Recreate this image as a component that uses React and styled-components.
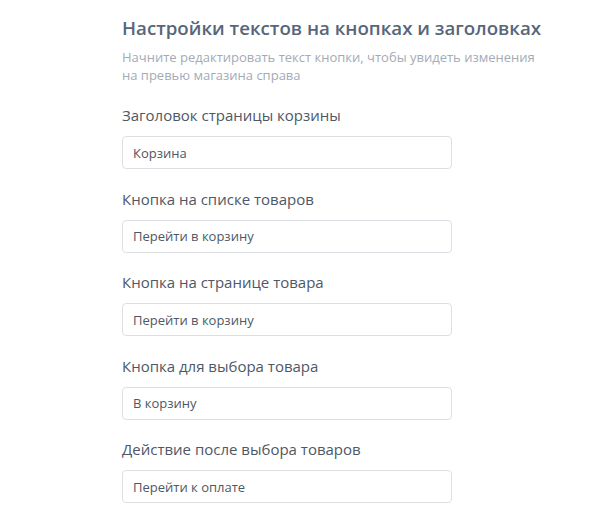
import React from "react";
import styled, { createGlobalStyle } from "styled-components";

const GlobalStyle = createGlobalStyle`
  body {
    margin: 0;
    background: #ffffff;
    font-family: "Open Sans", "Noto Sans", sans-serif;
  }
`;

const Page = styled.div`
  padding: 14px 0 0 122px;
  width: 330px;
`;

const Title = styled.h2`
  margin: 0;
  font-size: 18.7px;
  font-weight: 600;
  line-height: 28px;
  color: #57667a;
  white-space: nowrap;
`;

const Subtitle = styled.p`
  margin: 6px 0 0;
  width: 420px;
  font-size: 13px;
  line-height: 18px;
  color: #a3abb6;
`;

const Fields = styled.div`
  display: flex;
  flex-direction: column;
  gap: 19.5px;
  margin-top: 21px;
`;

const Field = styled.label`
  display: flex;
  flex-direction: column;
  gap: 10px;
`;

const Label = styled.span`
  font-size: 15px;
  line-height: 21px;
  color: #4d5866;
`;

const Input = styled.input`
  box-sizing: border-box;
  width: 330px;
  height: 33px;
  padding: 0 10px;
  border: 1px solid #dcdfe4;
  border-radius: 4px;
  font-family: inherit;
  font-size: 13px;
  color: #4d5866;
  outline: none;
`;

const fields = [
  ["Заголовок страницы корзины", "Корзина"],
  ["Кнопка на списке товаров", "Перейти в корзину"],
  ["Кнопка на странице товара", "Перейти в корзину"],
  ["Кнопка для выбора товара", "В корзину"],
  ["Действие после выбора товаров", "Перейти к оплате"],
];

const App = () => {
  return (
    <Page>
      <GlobalStyle />
      <Title>Настройки текстов на кнопках и заголовках</Title>
      <Subtitle>
        Начните редактировать текст кнопки, чтобы увидеть изменения на превью магазина справа
      </Subtitle>
      <Fields>
        {fields.map(([label, value]) => (
          <Field key={label}>
            <Label>{label}</Label>
            <Input defaultValue={value} />
          </Field>
        ))}
      </Fields>
    </Page>
  );
};

export default App;
